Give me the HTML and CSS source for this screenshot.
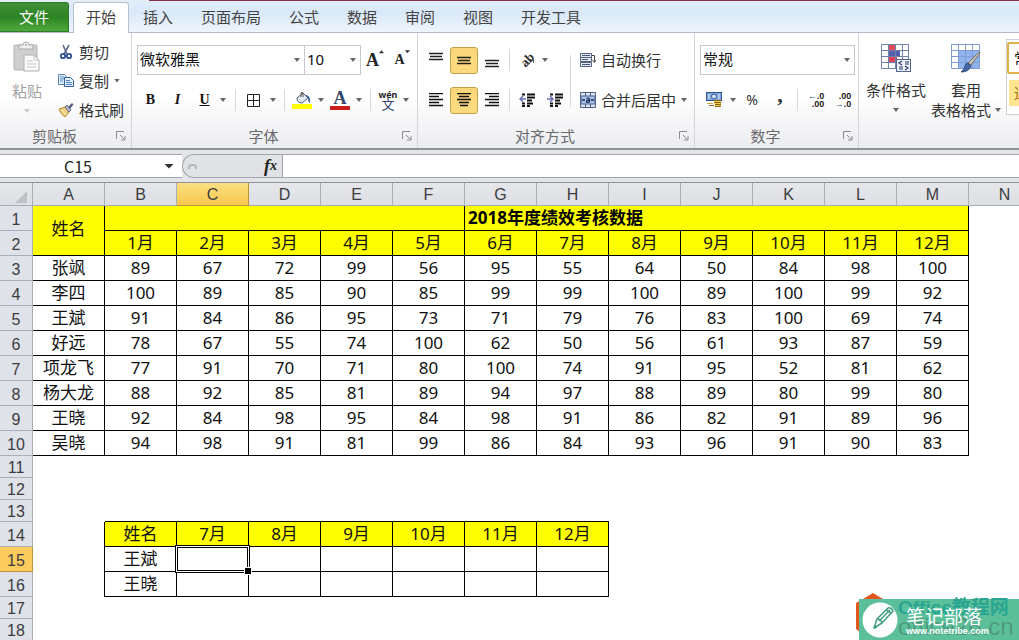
FILE: index.html
```html
<!DOCTYPE html>
<html lang="zh-CN">
<head>
<meta charset="utf-8">
<meta name="viewport" content="width=device-width, initial-scale=1">
<title>2018年度绩效考核数据</title>
<link rel="stylesheet" href="styles.css">
</head>
<body>
<div class="app">
  <nav class="tabs">
    <button class="tab tab-file">文件</button>
    <button class="tab tab-active">开始</button>
    <button class="tab">插入</button>
    <button class="tab">页面布局</button>
    <button class="tab">公式</button>
    <button class="tab">数据</button>
    <button class="tab">审阅</button>
    <button class="tab">视图</button>
    <button class="tab">开发工具</button>
  </nav>

  <div class="ribbon">
    <section class="group group-clip">
      <div class="group-body">
        <button class="big-btn paste">
          <svg width="28" height="32" viewBox="0 0 28 32"><rect x="1" y="4" width="23" height="25" rx="1" fill="#cfcfcf" stroke="#b4b4b4"/><path d="M6 8V4h4q0-3 3-3t3 3h4v4z" fill="#efefef" stroke="#a8a8a8"/><circle cx="13" cy="4" r="1" fill="#aaa"/><path d="M11 14h10l5 5v11H11z" fill="#fafafa" stroke="#b0b0b0"/><path d="M21 14v5h5M14 20h6M14 23h9M14 26h9" fill="none" stroke="#c4c4c4"/></svg>
          <span>粘贴</span><i class="caret"></i>
        </button>
        <div class="clip-list">
          <button class="line-btn"><svg width="16" height="16" viewBox="0 0 16 16"><path d="M5 1l4 9M11 1L6 10" stroke="#5c6b86" stroke-width="1.6" fill="none"/><circle cx="5" cy="12" r="2.2" fill="none" stroke="#2d4f9c" stroke-width="1.8"/><circle cx="11" cy="12" r="2.2" fill="none" stroke="#2d4f9c" stroke-width="1.8"/></svg><span>剪切</span></button>
          <button class="line-btn"><svg width="16" height="16" viewBox="0 0 16 16"><path d="M.5 1.500h6l2 2v8h-8z" fill="#dcebfa" stroke="#5a83b5"/><path d="M2 4h4M2 6h4M2 8h3" stroke="#5f8fc9"/><path d="M6.500 4.500h6l3 3v6h-9z" fill="#e8f2fc" stroke="#2f5f9e"/><path d="M8 7.500h4M8 9.500h6M8 11.500h6" stroke="#4a7ebd"/></svg><span>复制</span><i class="caret"></i></button>
          <button class="line-btn"><svg width="16" height="16" viewBox="0 0 16 16"><path d="M1 7l6-2 4 5-4 5q-4-2-6-8z" fill="#f0d27c" stroke="#b18b3a"/><path d="M4 8l4 5" stroke="#fff3c0"/><path d="M7 5l2-2 4 5-2 2z" fill="#b9bed0" stroke="#666c84"/><path d="M10 5l4-4 1.500 1.500L12 7z" fill="#59617d"/></svg><span>格式刷</span></button>
        </div>
      </div>
      <footer class="group-foot"><span>剪贴板</span><button class="launcher" aria-label="剪贴板选项"><svg width="10" height="10" viewBox="0 0 10 10"><use href="#launch"/></svg></button></footer>
    </section>

    <section class="group group-font">
      <div class="group-body stack">
        <div class="row">
          <label class="combo combo-font"><select aria-label="字体"><option>微软雅黑</option></select><i class="caret"></i></label>
          <label class="combo combo-size"><select aria-label="字号"><option>10</option></select><i class="caret"></i></label>
          <button class="size-btn grow" aria-label="增大字号"><b>A</b><svg width="5" height="4" viewBox="0 0 6 4"><path d="M0 3.500L3 0l3 3.500z" fill="#333"/></svg></button>
          <button class="size-btn shrink" aria-label="减小字号"><b>A</b><svg width="5" height="4" viewBox="0 0 6 4"><path d="M0 0h6L3 3.500z" fill="#333"/></svg></button>
        </div>
        <div class="font-tools">
          <button class="serif"><b>B</b></button>
          <button class="serif"><i>I</i></button>
          <button class="serif"><u>U</u></button>
          <i class="caret"></i><i class="sep"></i>
          <button aria-label="边框"><svg width="15" height="15" viewBox="0 0 15 15"><path d="M1.500 1.500h12v12h-12zM7.500 1.500v12M1.500 7.500h12" fill="none" stroke="#222"/></svg></button>
          <i class="caret"></i><i class="sep"></i>
          <button aria-label="填充颜色"><svg width="20" height="18" viewBox="0 0 20 18"><path d="M5 7l6-5 5 5-6 5q-5 0-5-5z" fill="#e3eaf3" stroke="#4c5b73"/><path d="M9 6V2q1-2 2 0v4" fill="none" stroke="#555"/><path d="M13 4q6 0 5 8-2-1-2-5z" fill="#3c6496"/><rect y="13" width="20" height="5" fill="#ffff00"/></svg></button>
          <i class="caret"></i>
          <button class="font-color"><b>A</b></button>
          <i class="caret"></i><i class="sep"></i>
          <button class="phonetic"><small>wén</small><span>文</span></button>
          <i class="caret"></i>
        </div>
      </div>
      <footer class="group-foot"><span>字体</span><button class="launcher" aria-label="字体选项"><svg width="10" height="10" viewBox="0 0 10 10"><use href="#launch"/></svg></button></footer>
    </section>

    <section class="group group-align">
      <div class="group-body">
        <div class="align-tools">
          <button aria-label="顶端对齐"><svg width="15" height="18" viewBox="0 0 15 18"><path d="M0 2.500h14M1 5.500h12M0 8.500h14" stroke="#222" stroke-width="1.500"/></svg></button>
          <button class="on" aria-label="垂直居中"><svg width="15" height="18" viewBox="0 0 15 18"><path d="M0 6.500h14M1 9.500h12M0 12.500h14" stroke="#222" stroke-width="1.500"/></svg></button>
          <button aria-label="底端对齐"><svg width="15" height="18" viewBox="0 0 15 18"><path d="M0 9.500h14M1 12.500h12M0 15.500h14" stroke="#222" stroke-width="1.500"/></svg></button>
          <i class="sep"></i>
          <button class="slant" aria-label="方向"><b>ab</b><svg width="17" height="16" viewBox="0 0 17 16"><path d="M6 15l8-7M11 7.500h3.500V11" fill="none" stroke="#666"/></svg></button>
          <i class="caret"></i>
          <button aria-label="左对齐"><svg width="15" height="14" viewBox="0 0 15 14"><path d="M0 .5h14M0 3.500h10M0 6.500h14M0 9.500h10M0 12.500h14" stroke="#111" stroke-width="1.500"/></svg></button>
          <button class="on" aria-label="居中"><svg width="15" height="14" viewBox="0 0 15 14"><path d="M0 .5h14M2 3.500h10M0 6.500h14M2 9.500h10M3 12.500h8" stroke="#111" stroke-width="1.500"/></svg></button>
          <button aria-label="右对齐"><svg width="15" height="14" viewBox="0 0 15 14"><path d="M0 .5h14M4 3.500h10M0 6.500h14M4 9.500h10M0 12.500h14" stroke="#111" stroke-width="1.500"/></svg></button>
          <i class="sep"></i>
          <button aria-label="减少缩进"><svg width="16" height="14" viewBox="0 0 16 14"><path d="M3 1.500h3M8 1.500h8M8 4.500h8M8 7.500h5M3 10.500h3M8 10.500h6M3 13h3M8 13h3" stroke="#111" stroke-width="1.800"/><path d="M7 6H2M4 3L1 6l3 3" fill="none" stroke="#6a72b8" stroke-width="1.500"/></svg></button>
          <button aria-label="增加缩进"><svg width="16" height="14" viewBox="0 0 16 14"><path d="M3 1.500h3M8 1.500h8M8 4.500h8M8 7.500h5M3 10.500h3M8 10.500h6M3 13h3M8 13h3" stroke="#111" stroke-width="1.800"/><path d="M0 6h5M3 3l3 3-3 3" fill="none" stroke="#6a72b8" stroke-width="1.500"/></svg></button>
        </div>
        <i class="sep sep-tall"></i>
        <div class="stack">
          <button class="line-btn"><svg width="16" height="16" viewBox="0 0 16 16"><path d="M0.500 1.500h11v4h-11zM0.500 5.500h11v4h-11zM0.500 10.500h11v4h-11z" fill="#e4e9f2" stroke="#56627c"/><path d="M2 3.500h8M2 7.500h6M2 12.500h8" stroke="#4a5a86"/><path d="M12 3.500h2.500v6M12.500 8l2 2.500 1.500-2.500" fill="none" stroke="#444"/></svg><span>自动换行</span></button>
          <button class="line-btn"><svg width="16" height="16" viewBox="0 0 16 16"><path d="M.5.500h15v15H.5zM5.500.500v4M10.500.500v4M5.500 11.500v4M10.500 11.500v4" fill="#dfe6f2" stroke="#4d5f88"/><rect x="1" y="4" width="14" height="8" fill="#a9c4ec" stroke="#4d5f88"/><path d="M2 8h3M11 8h3M6.500 6.500q3-1 3 1v3M9.500 8q-3 0-3 1.500t3 .5" fill="none" stroke="#1d2a4d" stroke-width="1.300"/></svg><span>合并后居中</span><i class="caret"></i></button>
        </div>
      </div>
      <footer class="group-foot"><span>对齐方式</span><button class="launcher" aria-label="对齐选项"><svg width="10" height="10" viewBox="0 0 10 10"><use href="#launch"/></svg></button></footer>
    </section>

    <section class="group group-number">
      <div class="group-body stack">
        <label class="combo combo-number"><select aria-label="数字格式"><option>常规</option></select><i class="caret"></i></label>
        <div class="number-tools">
          <button aria-label="会计数字格式"><svg width="17" height="16" viewBox="0 0 17 16"><rect x=".5" y=".5" width="15" height="8" fill="#7fa6da" stroke="#2f5590"/><circle cx="8" cy="4.500" r="2.500" fill="#cfe0f5" stroke="#2f5590"/><path d="M3 2v5M13 2v5" stroke="#dce9f8"/><path d="M8 8h7v7H9z" fill="#e9c64c"/><path d="M8 8.500h7M8 10.500h7M9 12.500h6M3 13.500h5M9 14.500h6" stroke="#8a6a14"/><path d="M1 11.500h6" stroke="#c9a940"/></svg></button>
          <i class="caret"></i>
          <button class="percent">%</button>
          <button class="comma">,</button>
          <i class="sep"></i>
          <button class="decimals" aria-label="增加小数位数"><span><em>←</em>.0</span><span>.00</span></button>
          <button class="decimals" aria-label="减少小数位数"><span>.00</span><span><em>→</em>.0</span></button>
        </div>
      </div>
      <footer class="group-foot"><span>数字</span><button class="launcher" aria-label="数字选项"><svg width="10" height="10" viewBox="0 0 10 10"><use href="#launch"/></svg></button></footer>
    </section>

    <section class="group group-style">
      <div class="group-body">
        <button class="big-btn">
          <svg width="30" height="30" viewBox="0 0 30 30"><rect x=".5" y=".5" width="27" height="24" fill="#fff"/><path d="M7 1h7v5H7zM7 12h7v6H7z" fill="#e0485a"/><path d="M7 6h12v6H7z" fill="#5560a8"/><path d="M7 12h9v6H7z" fill="#dc4356"/><path d="M.5.500h27v24H.5zM7.500.500v24M14.500.500v24M21.500.500v24M.5 6.500h27M.5 12.500h27M.5 18.500h27" fill="none" stroke="#6d83ae"/><rect x="15.500" y="15.500" width="14" height="12" fill="#eef2fa" stroke="#53668f"/><path d="M21 17l-3 2 3 2M18 23h4M18 25h4M24 18h4M24 20h4M24 22l3 2-3 2" fill="none" stroke="#25365f" stroke-width="1.200"/></svg>
          <span>条件格式</span><i class="caret"></i>
        </button>
        <button class="big-btn">
          <svg width="30" height="30" viewBox="0 0 30 30"><rect x=".5" y=".5" width="28" height="24" fill="#fff"/><rect x="7" y="6" width="21" height="18" fill="#8fb4f0"/><path d="M.5.500h28v24H.5zM7.500.500v24M14.500.500v24M21.500.500v24M.5 6.500h28M.5 12.500h28M.5 18.500h28" fill="none" stroke="#7f9bd0"/><path d="M29 9l-9 12-3-2L27 9q2-2 2 0z" fill="#c8c2bc" stroke="#77706c"/><path d="M17 19l3 3q-2 6-10 6 4-3 4-6 1-3 3-3z" fill="#4668a8" stroke="#33497c"/></svg>
          <span>套用</span><span class="with-caret">表格格式<i class="caret"></i></span>
        </button>
        <div class="gallery"><button class="style-normal">常规</button><button class="style-mid">适中</button></div>
      </div>
    </section>
  </div>

  <div class="formula-bar">
    <div class="name-box"><input aria-label="名称框" value="C15"><i class="caret caret-big"></i></div>
    <div class="fx-zone"><i class="dash"></i><button class="fx" aria-label="插入函数">f<sub>x</sub></button></div>
    <input class="formula" aria-label="编辑栏">
  </div>

  <main class="sheet">
    <table>
      <colgroup><col class="col-num"><col span="14" class="col-cell"></colgroup>
      <thead><tr><th class="corner"><svg width="12" height="12" viewBox="0 0 12 12"><path d="M12 0v12H0z" fill="#bfc1c6"/></svg></th><th>A</th><th>B</th><th class="picked">C</th><th>D</th><th>E</th><th>F</th><th>G</th><th>H</th><th>I</th><th>J</th><th>K</th><th>L</th><th>M</th><th>N</th></tr></thead>
      <tbody>
        <tr><th>1</th><td class="c y name-head" rowspan="2">姓名</td><td class="c y" colspan="5"></td><td class="c y title" colspan="7">2018年度绩效考核数据</td><td></td></tr>
        <tr><th>2</th><td class="c y">1月</td><td class="c y">2月</td><td class="c y">3月</td><td class="c y">4月</td><td class="c y">5月</td><td class="c y">6月</td><td class="c y">7月</td><td class="c y">8月</td><td class="c y">9月</td><td class="c y">10月</td><td class="c y">11月</td><td class="c y">12月</td><td></td></tr>
        <tr><th>3</th><td class="c">张飒</td><td class="c">89</td><td class="c">67</td><td class="c">72</td><td class="c">99</td><td class="c">56</td><td class="c">95</td><td class="c">55</td><td class="c">64</td><td class="c">50</td><td class="c">84</td><td class="c">98</td><td class="c">100</td><td></td></tr>
        <tr><th>4</th><td class="c">李四</td><td class="c">100</td><td class="c">89</td><td class="c">85</td><td class="c">90</td><td class="c">85</td><td class="c">99</td><td class="c">99</td><td class="c">100</td><td class="c">89</td><td class="c">100</td><td class="c">99</td><td class="c">92</td><td></td></tr>
        <tr><th>5</th><td class="c">王斌</td><td class="c">91</td><td class="c">84</td><td class="c">86</td><td class="c">95</td><td class="c">73</td><td class="c">71</td><td class="c">79</td><td class="c">76</td><td class="c">83</td><td class="c">100</td><td class="c">69</td><td class="c">74</td><td></td></tr>
        <tr><th>6</th><td class="c">好远</td><td class="c">78</td><td class="c">67</td><td class="c">55</td><td class="c">74</td><td class="c">100</td><td class="c">62</td><td class="c">50</td><td class="c">56</td><td class="c">61</td><td class="c">93</td><td class="c">87</td><td class="c">59</td><td></td></tr>
        <tr><th>7</th><td class="c">项龙飞</td><td class="c">77</td><td class="c">91</td><td class="c">70</td><td class="c">71</td><td class="c">80</td><td class="c">100</td><td class="c">74</td><td class="c">91</td><td class="c">95</td><td class="c">52</td><td class="c">81</td><td class="c">62</td><td></td></tr>
        <tr><th>8</th><td class="c">杨大龙</td><td class="c">88</td><td class="c">92</td><td class="c">85</td><td class="c">81</td><td class="c">89</td><td class="c">94</td><td class="c">97</td><td class="c">88</td><td class="c">89</td><td class="c">80</td><td class="c">99</td><td class="c">80</td><td></td></tr>
        <tr><th>9</th><td class="c">王晓</td><td class="c">92</td><td class="c">84</td><td class="c">98</td><td class="c">95</td><td class="c">84</td><td class="c">98</td><td class="c">91</td><td class="c">86</td><td class="c">82</td><td class="c">91</td><td class="c">89</td><td class="c">96</td><td></td></tr>
        <tr><th>10</th><td class="c">吴晓</td><td class="c">94</td><td class="c">98</td><td class="c">91</td><td class="c">81</td><td class="c">99</td><td class="c">86</td><td class="c">84</td><td class="c">93</td><td class="c">96</td><td class="c">91</td><td class="c">90</td><td class="c">83</td><td></td></tr>
        <tr class="short"><th>11</th><td colspan="14"></td></tr>
        <tr class="short"><th>12</th><td colspan="14"></td></tr>
        <tr class="short"><th>13</th><td></td><td class="line-below" colspan="7"></td><td colspan="6"></td></tr>
        <tr><th>14</th><td class="line-right"></td><td class="c y">姓名</td><td class="c y">7月</td><td class="c y">8月</td><td class="c y">9月</td><td class="c y">10月</td><td class="c y">11月</td><td class="c y">12月</td><td colspan="6"></td></tr>
        <tr><th class="picked">15</th><td class="line-right"></td><td class="c">王斌</td><td class="c current"><span class="cursor"></span></td><td class="c"></td><td class="c"></td><td class="c"></td><td class="c"></td><td class="c"></td><td colspan="6"></td></tr>
        <tr><th>16</th><td class="line-right"></td><td class="c">王晓</td><td class="c"></td><td class="c"></td><td class="c"></td><td class="c"></td><td class="c"></td><td class="c"></td><td colspan="6"></td></tr>
        <tr class="short"><th>17</th><td colspan="14"></td></tr>
        <tr class="short"><th>18</th><td colspan="14"></td></tr>
      </tbody>
    </table>
  </main>

  <aside class="watermark">
    <svg class="hex" width="32" height="48" viewBox="0 0 32 48"><path d="M0 10L17 0l15 9v8H4v22l-4-3z" fill="#e2571f"/></svg>
    <div class="brand-back"><span class="site">Office教程网</span><span class="domain">office26.cn</span></div>
    <div class="badge">
      <svg width="36" height="36" viewBox="0 0 36 36"><circle cx="18" cy="18" r="17.500" fill="#fff"/><g fill="none" stroke="#3f9f7c" stroke-width="1.500" stroke-linejoin="round"><path d="M12 26l3-9L26 6q3-1 5 3l-11 12z"/><path d="M15 17q4 0 5 4M17 19L28 8M24 8q4 1 5 4M12 26l3-1"/></g></svg>
      <div class="badge-text"><span class="badge-name">笔记部落</span><span class="badge-url">www.notetribe.com</span></div>
    </div>
  </aside>
</div>
<svg width="0" height="0" class="defs"><symbol id="launch" viewBox="0 0 10 10"><path d="M.5 8V.500H8M4 4l4 4M9 5v4H5" fill="none" stroke="#8a8a90"/></symbol></svg>
</body>
</html>
```
FILE: styles.css
```css
* { box-sizing: border-box; }

body {
  margin: 0;
  background: #fff;
  color: #333;
  font: 15px/20px "Noto Sans", "Noto Sans CJK SC", sans-serif;
}

.app { position: relative; min-height: 100vh; overflow: hidden; }
.defs { position: absolute; }

button, select, input {
  margin: 0;
  padding: 0;
  border: 0;
  border-radius: 0;
  background: none;
  color: inherit;
  font: inherit;
}
button { display: flex; align-items: center; justify-content: center; white-space: nowrap; }
svg { display: block; flex: none; }

.caret {
  flex: none;
  width: 6px;
  height: 4px;
  background: #666;
  clip-path: polygon(0 0, 100% 0, 50% 100%);
}
.sep { width: 1px; height: 22px; background: #d8d9dc; }

/* Tabs */
.tabs {
  display: flex;
  height: 33px;
  padding-top: 2px;
  border-bottom: 1px solid #b4bcc8;
  background: linear-gradient(90deg, #e6eef5 0 149px, #8c2f4c 149px) top / 100% 1px no-repeat,
    linear-gradient(#e0eefb, #d9e9f9 40%, #eff5fc);
}
.tab { height: 30px; padding: 0 14px; color: #444; }
.tab-file {
  width: 69px;
  border-radius: 0 3px 0 0;
  border: 1px solid #2f7a28;
  border-left: 0;
  background: linear-gradient(#3f9136, #2d8424 50%, #4fa83a);
  color: #fff;
}
.tab-active {
  height: 31px;
  margin-left: 4px;
  padding: 0 12px 2px;
  border: 1px solid #b9c1cc;
  border-bottom: 0;
  border-radius: 3px 3px 0 0;
  background: #fff;
}

/* Ribbon */
.ribbon {
  display: flex;
  height: 117px;
  border-bottom: 2px solid #8f9299;
  background: linear-gradient(#fff, #fff 55%, #ebecef);
}
.group {
  display: flex;
  flex: none;
  flex-direction: column;
  justify-content: space-between;
  border-right: 1px solid #d2d4d8;
}
.group-clip { width: 132px; }
.group-font { width: 286px; }
.group-align { width: 277px; }
.group-number { width: 164px; }
.group-style { flex: 1; border: 0; overflow: hidden; }

.group-body { display: flex; padding-top: 12px; }
.stack { display: flex; flex-direction: column; gap: 10px; }
.row { display: flex; align-items: center; height: 30px; }
.group-foot { display: flex; align-items: center; height: 22px; padding: 0 5px 2px 0; color: #6a6a6e; }
.group-foot span { flex: 1; text-align: center; }
.launcher { width: 10px; margin-left: 7px; }

.line-btn { gap: 5px; height: 30px; justify-content: flex-start; }
.big-btn { flex-direction: column; justify-content: flex-start; height: 80px; }
.big-btn .caret { margin-top: 8px; }

.group-clip .group-body { padding: 4px 0 0 11px; gap: 15px; }
.group-clip .line-btn { height: 29px; }
.paste { width: 32px; margin-top: 4px; color: #a0a0a0; }
.paste svg { margin-bottom: 8px; }
.paste .caret { background: #c8c8c8; }

.group-font .group-body { padding-left: 5px; }
.combo { display: grid; align-items: center; height: 30px; border: 1px solid #c6c8cc; background: #fff; }
.combo > * { grid-area: 1 / 1; }
.combo select { width: 100%; height: 28px; padding: 0 0 2px 2px; appearance: none; color: #111; }
.combo .caret { justify-self: end; margin-right: 4px; }
.combo-font { width: 168px; }
.combo-size { width: 56px; border-left: 0; }
.size-btn { align-items: flex-start; font-family: "Liberation Serif", serif; color: #222; }
.grow { width: 28px; font-size: 18px; }
.shrink { width: 26px; font-size: 14px; }

.font-tools, .number-tools, .align-tools { display: grid; align-items: center; justify-items: center; }
.font-tools {
  grid-template-columns: 27px 27px 27px 10px 14px 22px 18px 4px 32px 6px 32px 6px 16px 20px 16px;
  height: 30px;
}
.serif { font: bold 14px/20px "Liberation Serif", serif; color: #111; }
.font-color { width: 20px; border-bottom: 4px solid #cc1d1d; font: 18px/15px "Liberation Serif", serif; color: #34466c; }
.phonetic { flex-direction: column; color: #34427a; }
.phonetic small { font-size: 9px; font-weight: bold; line-height: 7px; color: #222; }
.phonetic span { font-size: 13px; line-height: 12px; }

.group-align .group-body { padding-left: 4px; }
.align-tools {
  grid-template: 30px 30px / 28px 28px 28px 6px 30px 26px;
  row-gap: 10px;
}
.align-tools .caret { justify-self: start; }
.align-tools .slant { display: grid; }
.slant > * { grid-area: 1 / 1; }
.slant b { font: bold 13px/14px "Liberation Serif", serif; rotate: -45deg; }
.on {
  width: 28px;
  height: 27px;
  border: 1px solid #c2a04c;
  border-radius: 3px;
  background: linear-gradient(#fbd67a, #fcdc80);
}
.sep-tall { height: 52px; margin: 10px 9px 0 2px; }

.group-number .group-body { padding-left: 5px; }
.combo-number { width: 155px; }
.number-tools { grid-template-columns: 28px 10px 28px 28px 6px 32px 22px; height: 30px; }
.percent { font-size: 14px; }
.comma { font: bold 22px/10px "Liberation Serif", serif; height: 20px; align-items: flex-start; }
.decimals { flex-direction: column; align-items: flex-end; font: bold 9px/8px "Liberation Sans", sans-serif; color: #222; }
.decimals em { font-style: normal; color: #55607a; }

.group-style .group-body { gap: 5px; padding: 11px 0 0 7px; }
.group-style .big-btn svg { margin-bottom: 6px; }
.group-style .big-btn { flex: none; width: 60px; }
.group-style .big-btn + .big-btn { width: 70px; }
.group-style .big-btn .with-caret .caret { margin: 0; }
.with-caret { display: flex; align-items: center; gap: 4px; }
.gallery { flex: none; width: 80px; height: 76px; padding: 2px 0; border: 1px solid #cfd0d4; margin: -5px 0 0; background: #fff; }
.gallery button { width: 72px; height: 32px; padding-left: 5px; justify-content: flex-start; color: #111; }
.style-normal { border: 2px solid #e0b24a; border-radius: 2px; }
.gallery .style-mid { height: 26px; margin: 6px 0 0 2px; background: #ffe58f; color: #9c6500; }

/* Formula bar */
.formula-bar {
  display: flex;
  height: 33px;
  padding: 4px 0;
  border-bottom: 1px solid #8f9299;
  background: #e4e5e9;
}
.name-box, .fx-zone, .formula { border: solid #a2a5ab; border-width: 1px 0; }
.name-box { display: flex; align-items: center; flex: none; width: 182px; background: #fff; }
.name-box input { width: 156px; margin-right: 8px; font: 16px/20px "Noto Sans CJK SC", sans-serif; color: #222; text-align: center; }
.caret-big { width: 10px; height: 5px; background: #333; }
.fx-zone {
  display: flex;
  align-items: center;
  justify-content: space-between;
  flex: none;
  width: 100px;
  padding: 0 5px;
  border-left-width: 1px;
  border-radius: 12px 0 0 12px;
  background: #e1e2e6;
}
.dash { width: 9px; height: 5px; border: 2px solid #b4b6bc; border-bottom: 0; border-radius: 4px 4px 0 0; }
.fx { font: italic bold 18px/20px "Liberation Serif", serif; color: #222; }
.fx sub { font-size: 14px; line-height: 10px; }
.formula { flex: 1; min-width: 0; border-left-width: 1px; background: #fff; }

/* Sheet */
table { width: 1041px; border-collapse: separate; border-spacing: 0; table-layout: fixed; }
.col-num { width: 33px; }
.col-cell { width: 72px; }
th, td { padding: 0; overflow: hidden; white-space: nowrap; }
tbody tr { height: 25px; }
tbody .short { height: 22px; }
thead tr { height: 23px; }
th {
  border: solid #a9adb5;
  border-width: 0 1px 1px 0;
  background: linear-gradient(#e6e7eb, #dddfe4);
  color: #3c3c40;
  font: 16px/20px "Liberation Sans", sans-serif;
}
thead th { padding-top: 2px; }
tbody th { padding-top: 3px; line-height: 18px; background: #dfe2e8; }
.corner svg { margin: 3px 0 0 15px; }
.picked { border-color: #bf9438; background: linear-gradient(#fbdf82, #f6c84e); }
tbody .picked { background: #fbcb5c; }
td { font-size: 17px; line-height: 22px; text-align: center; color: #111; }
.c { border: solid #000; border-width: 0 1px 1px 0; }
.y { background: #ffff00; }
.name-head { padding-bottom: 4px; }
.title { padding-left: 3px; font-weight: bold; text-align: left; color: #000; }
.line-below { border-bottom: 1px solid #000; }
.line-right { border-right: 1px solid #000; }
.current { position: relative; overflow: visible; }
.cursor {
  position: absolute;
  inset: -2px;
  border: 1px solid #000;
  box-shadow: inset 0 0 0 1px #fff, inset 0 0 0 2px #000;
}
.cursor::after {
  content: "";
  position: absolute;
  right: -3px;
  bottom: -3px;
  width: 6px;
  height: 6px;
  border: 1px solid #fff;
  background: #000;
}

/* Watermark over the sheet corner */
.watermark { position: absolute; right: 0; bottom: 0; width: 163px; height: 48px; overflow: hidden; }
.hex { position: absolute; left: 0; top: 0; }
.brand-back {
  position: absolute;
  inset: 6px 0 0 3px;
  display: flex;
  flex-direction: column;
  padding-left: 39px;
  background: #5bc09a;
  white-space: nowrap;
}
.site { font: bold 19px/18px "Liberation Sans", "Noto Sans CJK SC", sans-serif; color: #2aa592; }
.domain { font: 24px/19px "Liberation Sans", sans-serif; color: #4f9b80; }
.badge { position: absolute; inset: 9px 0 0 6px; display: flex; gap: 8px; color: #fff; }
.badge-text { display: flex; flex-direction: column; padding-top: 5px; white-space: nowrap; }
.badge-name { font-size: 19px; line-height: 20px; }
.badge-url { font: bold 9px/9px "Liberation Sans", sans-serif; }
```
